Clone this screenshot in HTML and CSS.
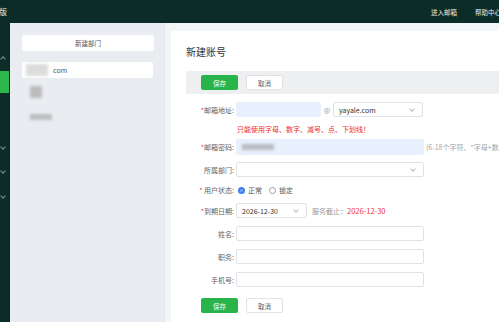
FILE: index.html
```html
<!DOCTYPE html>
<html>
<head>
    <title>新建账号</title>
    <link rel="stylesheet" href="styles.css">
</head>
<body>
    <div class="topbar">
        <span class="brand">版</span>
        <div class="topnav">
            <a>进入邮箱</a>
            <a>帮助中心</a>
        </div>
    </div>

    <div class="main">
        <div class="rail">
            <span class="chev up"></span>
            <span class="rail-active"></span>
            <span class="chev down first"></span>
            <span class="chev down"></span>
            <span class="chev down"></span>
        </div>

        <div class="dept">
            <button class="dept-new">新建部门</button>
            <div class="dept-item selected"><span class="blur b1"></span>com</div>
            <div class="dept-item"><span class="blur b2"></span></div>
            <div class="dept-item"><span class="blur b3"></span></div>
        </div>

        <div class="content">
            <div class="card">
                <h2 class="title">新建账号</h2>
                <div class="toolbar">
                    <button class="btn btn-save">保存</button>
                    <button class="btn btn-cancel">取消</button>
                </div>

                <div class="form">
                    <div class="row">
                        <label><i>*</i>邮箱地址:</label>
                        <div class="field fill short"></div>
                        <span class="at">@</span>
                        <div class="field select domain">yayale.com<span class="arrow"></span></div>
                    </div>
                    <div class="error">只能使用字母、数字、减号、点、下划线！</div>
                    <div class="row tall">
                        <label><i>*</i>邮箱密码:</label>
                        <div class="field fill wide"><span class="blur b4"></span></div>
                        <span class="hint">(6-18个字符、"字母+数字"组合)</span>
                    </div>
                    <div class="row">
                        <label>所属部门:</label>
                        <div class="field select wide"><span class="arrow"></span></div>
                    </div>
                    <div class="row radios">
                        <label><i>*</i> 用户状态:</label>
                        <span class="radio on"></span><span class="opt">正常</span>
                        <span class="radio"></span><span class="opt">锁定</span>
                    </div>
                    <div class="row">
                        <label><i>*</i>到期日期:</label>
                        <div class="field select date">2026-12-30<span class="arrow"></span></div>
                        <span class="expire">服务截止：<em>2026-12-30</em></span>
                    </div>
                    <div class="row">
                        <label>姓名:</label>
                        <div class="field wide"></div>
                    </div>
                    <div class="row">
                        <label>职务:</label>
                        <div class="field wide"></div>
                    </div>
                    <div class="row">
                        <label>手机号:</label>
                        <div class="field wide"></div>
                    </div>
                    <div class="actions">
                        <button class="btn btn-save">保存</button>
                        <button class="btn btn-cancel">取消</button>
                    </div>
                </div>
            </div>
        </div>
    </div>
</body>
</html>
```

FILE: styles.css
```css
* {
    box-sizing: border-box;
}

body {
    margin: 0;
    width: 499px;
    height: 322px;
    overflow: hidden;
    font-family: "Noto Sans CJK SC", "Liberation Sans", sans-serif;
    font-size: 7px;
    color: #606266;
    background: #f3f5f7;
}

.topbar {
    height: 23px;
    background-color: #0c2d27;
    display: flex;
    align-items: center;
    justify-content: space-between;
    color: #e8eeec;
    overflow: hidden;
}

.brand {
    font-size: 8px;
    margin-left: -1px;
}

.topnav {
    display: flex;
    gap: 18px;
    margin-right: -2px;
    font-size: 6.5px;
    white-space: nowrap;
}

.main {
    display: flex;
    height: 299px;
}

.rail {
    width: 10px;
    flex-shrink: 0;
    background-color: #0c2d27;
    position: relative;
}

.rail-active {
    position: absolute;
    left: 0;
    top: 48px;
    width: 9px;
    height: 22px;
    background-color: #2db84d;
}

.chev {
    position: absolute;
    left: 1px;
    width: 4px;
    height: 4px;
    border-right: 1px solid #7d948f;
    border-bottom: 1px solid #7d948f;
}

.chev.up {
    top: 34px;
    transform: rotate(-135deg);
}

.chev.down {
    transform: rotate(45deg);
}

.chev.down.first { top: 122px; }
.chev.down:nth-child(4) { top: 146px; }
.chev.down:nth-child(5) { top: 171px; }

.dept {
    width: 155px;
    flex-shrink: 0;
    background-color: #e9edf1;
    padding: 12px 11px 0 12px;
    border-right: 1px solid #e3e7eb;
}

.dept-new {
    display: block;
    width: 132px;
    height: 16px;
    border: none;
    border-radius: 2px;
    background: #fff;
    font-family: inherit;
    font-size: 6.5px;
    color: #555;
    padding: 0;
}

.dept-item {
    height: 16px;
    margin-top: 11px;
    display: flex;
    align-items: center;
    padding-left: 4px;
    font-size: 7px;
    color: #555;
    border-radius: 2px;
}

.dept-item.selected {
    background: #fff;
    margin-top: 11px;
}

.dept-item + .dept-item {
    margin-top: 5px;
}

.dept-item.selected + .dept-item {
    margin-top: 6px;
}

.blur {
    display: inline-block;
    filter: blur(1.5px);
}

.b1 {
    width: 22px;
    height: 12px;
    background: #dcdcdc;
    margin-right: 5px;
}

.b2 {
    width: 12px;
    height: 12px;
    background: #bbb;
    margin-left: 4px;
}

.b3 {
    width: 22px;
    height: 6px;
    background: #bdbdbd;
    margin-left: 4px;
    margin-top: 8px;
}

.content {
    flex: 1;
    min-width: 0;
    padding: 8px 0 0 6px;
}

.card {
    background: #fff;
    height: 100%;
    padding: 15px 0 0 15px;
    overflow: hidden;
}

.title {
    margin: 0;
    font-size: 10px;
    font-weight: normal;
    color: #333;
    line-height: 12px;
}

.toolbar {
    margin-top: 13px;
    height: 23px;
    background: #eeeff0;
    display: flex;
    align-items: center;
    padding-left: 15px;
    gap: 8px;
}

.btn {
    width: 37px;
    height: 15px;
    border-radius: 2px;
    font-family: inherit;
    font-size: 6.5px;
    padding: 0;
}

.btn-save {
    background-color: #28b44a;
    color: #fff;
    border: none;
}

.btn-cancel {
    background-color: #fff;
    color: #606266;
    border: 1px solid #e0e2e6;
}

.form {
    padding-top: 8px;
}

.row {
    display: flex;
    align-items: center;
    height: 15px;
    margin-bottom: 8px;
}

.row.tall {
    height: 16px;
    margin-bottom: 7px;
}

label {
    width: 50px;
    flex-shrink: 0;
    text-align: right;
    padding-right: 2px;
    white-space: nowrap;
}

label i {
    font-style: normal;
    color: #f23030;
}

.field {
    flex-shrink: 0;
    height: 100%;
    border: 1px solid #dfe2e7;
    border-radius: 2px;
    position: relative;
    display: flex;
    align-items: center;
    padding-left: 5px;
    color: #333;
}

.field.fill {
    background-color: #e8f0fd;
    border-color: #e8f0fd;
}

.short { width: 85px; }
.wide { width: 188px; }
.domain { width: 90px; }
.date { width: 71px; }

.b4 {
    width: 32px;
    height: 6px;
    background: #b8bcc3;
}

.at {
    width: 12px;
    text-align: center;
    color: #999;
}

.arrow {
    position: absolute;
    right: 8px;
    top: 4px;
    width: 4px;
    height: 4px;
    border-right: 1px solid #b8bcc3;
    border-bottom: 1px solid #b8bcc3;
    transform: rotate(45deg);
}

.error {
    color: #f02b2b;
    padding-left: 51px;
    height: 12px;
    line-height: 12px;
    margin: -2px 0 4px;
}

.hint {
    margin-left: 2px;
    color: #a0a4aa;
    white-space: nowrap;
}

.row.radios {
    height: 10px;
}

.radio {
    flex-shrink: 0;
    width: 7px;
    height: 7px;
    border-radius: 50%;
    border: 1px solid #9aa0a8;
    margin-left: 2px;
}

.radio.on {
    border: 2px solid #3b82f0;
    background: #fff;
    box-shadow: inset 0 0 0 1px #3b82f0;
}

.opt {
    margin: 0 5px 0 3px;
    color: #555;
}

.expire {
    margin-left: 5px;
    color: #999;
    white-space: nowrap;
}

.expire em {
    font-style: normal;
    font-size: 7.5px;
    color: #ee3333;
}

.actions {
    display: flex;
    gap: 8px;
    padding-left: 15px;
    margin-top: 11px;
}
```
